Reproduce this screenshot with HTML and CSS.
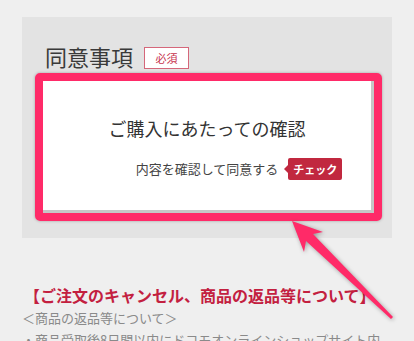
FILE: index.html
```html
<!DOCTYPE html>
<html lang="ja">
<head>
    <meta charset="UTF-8">
    <meta name="viewport" content="width=device-width, initial-scale=1.0">
    <title>同意事項</title>
    <link rel="stylesheet" href="styles.css">
</head>
<body>
    <section class="panel">
        <div class="panel-head">
            <h2>同意事項</h2>
            <span class="required">必須</span>
        </div>

        <!-- 確認ボックス -->
        <div class="highlight">
            <div class="confirm">
                <p class="confirm-title">ご購入にあたっての確認</p>
                <p class="confirm-row">
                    <span class="confirm-label">内容を確認して同意する<span class="check">チェック</span></span>
                </p>
            </div>
        </div>
    </section>

    <section class="notes">
        <h3>【ご注文のキャンセル、商品の返品等について】</h3>
        <p class="sub">＜商品の返品等について＞</p>
        <p class="text">・商品受取後8日間以内にドコモオンラインショップサイト内のお問い合わせフォームよりご連絡ください。</p>
    </section>

    <svg class="arrow" width="414" height="341" viewBox="0 0 414 341">
        <polygon points="292,221 323,232 313,234 393,317 391,319 306,241 304,252" fill="#ff2a68"/>
    </svg>
</body>
</html>
```

FILE: styles.css
```css
body {
    margin: 0;
    position: relative;
    height: 341px;
    overflow: hidden;
    background-color: #efefef;
    font-family: "Noto Sans CJK JP", "Noto Sans", sans-serif;
    color: #3c3c3c;
}
p, h2, h3 {
    margin: 0;
}
.panel {
    margin: 17px 22px 0;
    padding: 28px 0 17px;
    background-color: #e3e3e3;
}
.panel-head {
    display: flex;
    align-items: flex-start;
    margin: 0 0 4px 23px;
}
.panel-head h2 {
    font-size: 22px;
    line-height: 22px;
    font-weight: normal;
    color: #3a3a3a;
}
.required {
    box-sizing: border-box;
    width: 45px;
    height: 22px;
    margin: 2px 0 0 11px;
    border: 1px solid #d5677a;
    background-color: #fff;
    color: #c7334d;
    font-size: 11px;
    line-height: 20px;
    text-align: center;
}
.highlight {
    margin: 0 10px 0 13px;
    border: 8px solid #ff2a68;
    border-radius: 5px;
    box-shadow: 0 0 3px rgba(0, 0, 0, 0.3);
}
.confirm {
    padding: 35px 0 30px;
    background-color: #fff;
    border-right: 3px solid #c6c6c6;
    border-bottom: 3px solid #c6c6c6;
    text-align: center;
}
.confirm-title {
    font-size: 18px;
    line-height: 24px;
    color: #333;
}
.confirm-row {
    margin-top: 18px;
    font-size: 13px;
    line-height: 22px;
    color: #444;
}
.confirm-label {
    position: relative;
}
.check {
    position: absolute;
    left: calc(100% + 10px);
    top: -1px;
    height: 22px;
    padding: 0 5px;
    border-radius: 2px;
    background-color: #c1283f;
    color: #fff;
    font-size: 11px;
    font-weight: bold;
    line-height: 22px;
    white-space: nowrap;
}
.check::before {
    content: "";
    position: absolute;
    left: -4px;
    top: 7px;
    border-top: 4px solid transparent;
    border-bottom: 4px solid transparent;
    border-right: 4px solid #c1283f;
}
.notes {
    margin: 45px 22px 0;
}
.notes h3 {
    padding-left: 2px;
    font-size: 16px;
    line-height: 24px;
    font-weight: bold;
    color: #c3203f;
}
.sub, .text {
    font-size: 13px;
    line-height: 22px;
    color: #8a8a8a;
}
.arrow {
    position: absolute;
    top: 0;
    left: 0;
    pointer-events: none;
    filter: drop-shadow(1px 1px 2px rgba(0, 0, 0, 0.35));
}
```
